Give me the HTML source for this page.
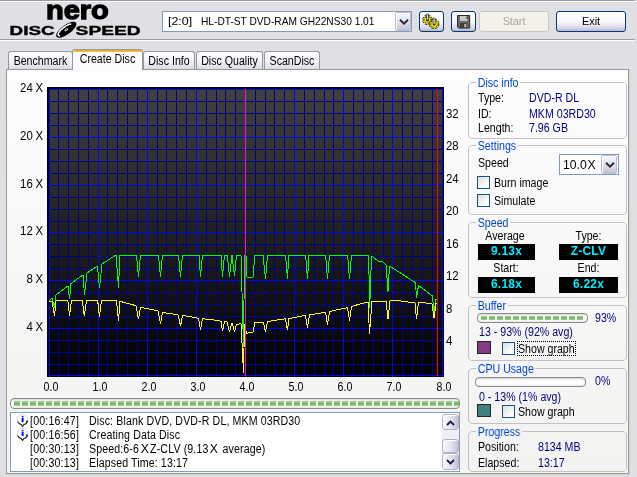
<!DOCTYPE html>
<html><head><meta charset="utf-8"><title>Nero DiscSpeed</title>
<style>
html,body{margin:0;padding:0}
body{width:637px;height:477px;overflow:hidden;background:#e0dfe3;position:relative;font-family:"Liberation Sans",Arial,sans-serif;font-size:12px;color:#000;line-height:14px}
div,span{position:absolute;box-sizing:border-box;white-space:nowrap}
.hl{left:0;width:635px;height:1px}
#logo{position:absolute;left:0;top:0}
.combo{background:#fff;border:1px solid #7f9db9}
.dd{border:1px solid #b4bdd8;border-radius:2px;background:linear-gradient(#f6f6fa,#e0dfea 55%,#c3c2d4);box-shadow:inset 1px 1px 0 #fff}
.dd svg{position:absolute;left:2.5px;top:6px}
.btn{border:1px solid #003c74;border-radius:3px;background:linear-gradient(#fff 0,#f9f9fc 50%,#dfddea 80%,#bcb9d3 100%);text-align:center;font-size:11px;line-height:19px;letter-spacing:-.1px}
.btn.dis{border-color:#c9c7ba;background:#f3f2ea;color:#a8a697}
.tab{top:51px;height:18px;border:1px solid #919b9c;border-bottom:none;border-radius:3px 3px 0 0;background:linear-gradient(#fff,#f4f4f8 50%,#dcdbe6)}
.tab.sel{top:49px;height:21px;background:#fcfcfe;z-index:3;overflow:hidden}
.tab.sel:before{content:"";position:absolute;left:-1px;right:-1px;top:-1px;height:3px;background:linear-gradient(#e68b2c,#ffc73c);border-radius:3px 3px 0 0}
#panel{left:6px;top:69px;width:623px;height:405px;border:1px solid #919b9c;background:linear-gradient(#fdfdfe,#f6f6f5 60%,#f3f3f1);z-index:1}
#shade{left:629px;top:69px;width:2px;height:407px;background:linear-gradient(90deg,#d9d6cb 50%,#dedcd8 50%);z-index:0}
#shade2{left:6px;top:474px;width:625px;height:2px;background:linear-gradient(#d9d6cb 50%,#dedcd8 50%);z-index:0}
#root{left:0;top:0;width:637px;height:477px;z-index:2;will-change:transform}
#graph{position:absolute;left:47px;top:87px}
.t{height:14px;line-height:14px;font-size:12px;transform:scaleX(.885);transform-origin:0 50%}
.t.c{text-align:center;transform-origin:50% 50%}
.t.r{text-align:right;transform-origin:100% 50%}
.t.r i{margin-right:0;transform:none;margin-left:2.8px}
.t i{font-style:normal;margin:0 2.2px;display:inline-block;transform:scaleX(1.15)}
.gt{color:#0046d5;background:#fafafa;padding:0 2px;margin-left:-2px}
.pb{border:1px solid #8a8a8a;border-radius:4px;background:linear-gradient(#d8d8d8,#fff 35%,#fff 70%,#e8e8e8);overflow:hidden}
.pb b{position:relative;display:inline-block;width:6px;height:5px;margin-right:2px;background:linear-gradient(#b4d8a4,#6cb454 50%,#a4d094);vertical-align:top}
.pb .in{left:3px;top:2px;line-height:0;font-size:0}
.pb.s b{height:4px}
.gb{left:468px;width:159px;border:1px solid #c6c3cb;border-radius:4px}
.nv{color:#000080}
.lcd{background:#000;color:#00ecff;font-weight:bold;font-size:12px;line-height:14px;height:16px;width:57px;text-align:center;letter-spacing:.2px}
.cb{width:13px;height:13px;border:1px solid #1c5180;background:linear-gradient(135deg,#dcdcd7,#fff 80%)}
.sq{width:14px;height:13px;border:1px solid #222}
#log{left:10px;top:412px;width:450px;height:60px;background:#fff;border:1px solid #7f9db9}
.sb{left:431px;width:17px;border:1px solid #b0afc6;border-radius:3px;background:linear-gradient(90deg,#fafafd,#e3e2ee 55%,#c2c1d4);box-shadow:inset 1px 1px 0 #fff}
#trk{left:431px;top:17px;width:17px;height:24px;background:#efeef5}
.tah{font-size:11px;line-height:13px;letter-spacing:-.2px}
</style></head><body>
<div id="shade"></div><div id="shade2"></div>
<div id="panel"></div>
<div id="root">
<div class="hl" style="top:0;background:#9d9da1"></div><div class="hl" style="top:1px;background:#fff"></div>
<div class="hl" style="top:39px;background:#9d9da1"></div><div class="hl" style="top:40px;background:#fff"></div>

<svg id="logo" width="160" height="39" viewBox="0 0 160 39">
<text x="45.9" y="19.2" font-family="Liberation Sans, Arial, sans-serif" font-weight="bold" font-size="26.5" textLength="63" lengthAdjust="spacingAndGlyphs" fill="#000" stroke="#000" stroke-width="1.3">nero</text>
<text x="9.6" y="34.8" font-family="Liberation Sans, Arial, sans-serif" font-weight="bold" font-size="13" textLength="45" lengthAdjust="spacingAndGlyphs" fill="#000" stroke="#000" stroke-width="0.4">DISC</text>
<text x="75.6" y="34.8" font-family="Liberation Sans, Arial, sans-serif" font-weight="bold" font-size="13" textLength="65" lengthAdjust="spacingAndGlyphs" fill="#000" stroke="#000" stroke-width="0.4">SPEED</text>
<g transform="translate(66.3 29.8) rotate(-36)"><ellipse cx="0" cy="0" rx="12" ry="4.7" fill="#000"/><path d="M-8.5 1.2 A9 3 0 0 1 7.5 -1.8" stroke="#fff" stroke-width="1.5" fill="none"/><ellipse cx="0" cy="0" rx="2" ry="1.1" fill="#fff"/><ellipse cx="0" cy="0" rx=".9" ry=".5" fill="#000"/></g>
</svg>

<div class="combo" style="left:162px;top:11px;width:250px;height:21px"><span class="tah" style="left:4.8px;top:3px;font-size:11.5px;letter-spacing:0;transform:scaleX(1.08);transform-origin:0 50%">[2:0]</span><span class="tah" style="left:38px;top:3px;font-size:11.5px;letter-spacing:0;transform:scaleX(.885);transform-origin:0 50%">HL-DT-ST DVD-RAM GH22NS30 1.01</span>
<div class="dd" style="left:232px;top:0px;width:16px;height:19px"><svg width="10" height="6" viewBox="0 0 10 6"><path d="M1 .8l4 3.8L9 .8" stroke="#2a2a3a" stroke-width="2" fill="none"/></svg></div></div>

<div class="btn" style="left:419px;top:11px;width:25px;height:21px">
<svg width="23" height="19" viewBox="0 0 23 19" style="position:absolute;left:0;top:0">
<g id="gr"><circle cx="7.5" cy="7.8" r="3.7" fill="none" stroke="#141000" stroke-width="3" stroke-dasharray="2 .906"/><circle cx="7.5" cy="7.8" r="3.2" fill="#141000"/><circle cx="7.5" cy="7.8" r="3.7" fill="none" stroke="#f6f000" stroke-width="1.7" stroke-dasharray="1.3 1.606" stroke-dashoffset="-.35"/><circle cx="7.5" cy="7.8" r="2.9" fill="#f6f000"/><ellipse cx="7.5" cy="8.4" rx="1.5" ry="1" fill="#2c2600"/><rect x="6.4" y="1.9" width="2.2" height="6" rx=".7" fill="#9a9a9a" stroke="#2a2a2a" stroke-width=".7"/><rect x="7.1" y="2.4" width=".8" height="5" fill="#ececec"/></g>
<use href="#gr" x="6.6" y="4.2"/></svg></div>
<div class="btn" style="left:451px;top:11px;width:25px;height:21px">
<svg width="23" height="19" viewBox="0 0 23 19" style="position:absolute;left:0;top:0"><path d="M5.5 3.5h12.2v12.6h-11l-1.2-1.2z" fill="#6a6a6a" stroke="#2c2c2c"/><rect x="8" y="4" width="7.4" height="5" fill="#c8c8c8"/><rect x="14.3" y="4.6" width="1.8" height="2" fill="#3a3a3a"/><rect x="8" y="11" width="7.2" height="5" fill="#3c3c3c"/><rect x="12.3" y="12" width="2" height="3.2" fill="#bdbdbd"/></svg></div>
<div class="btn dis" style="left:479px;top:11px;width:70px;height:21px">Start</div>
<div class="btn" style="left:556px;top:11px;width:70px;height:21px">Exit</div>

<div class="tab" style="left:8px;width:65px"></div>
<div class="tab sel" style="left:72px;width:71px"></div>
<div class="tab" style="left:143px;width:52px"></div>
<div class="tab" style="left:196px;width:67px"></div>
<div class="tab" style="left:264px;width:56px"></div>
<div style="z-index:4;left:0;top:0">
<span class="t c " style="left:8px;top:54px;width:65px;">Benchmark</span>
<span class="t c " style="left:72px;top:52px;width:71px;">Create Disc</span>
<span class="t c " style="left:143px;top:54px;width:52px;">Disc Info</span>
<span class="t c " style="left:196px;top:54px;width:67px;">Disc Quality</span>
<span class="t c " style="left:264px;top:54px;width:56px;">ScanDisc</span>
</div>

<svg id="graph" width="397" height="290" viewBox="47 87 397 290" shape-rendering="crispEdges">
<defs><linearGradient id="gg" x1="0" y1="0" x2="0" y2="1"><stop offset="0" stop-color="#404040"/><stop offset="1" stop-color="#000"/></linearGradient></defs>
<rect x="47" y="87" width="397" height="290" fill="#000"/>
<rect x="49" y="89" width="394" height="287" fill="url(#gg)"/>
<path d="M58 89v287M68 89v287M78 89v287M88 89v287M107 89v287M117 89v287M127 89v287M137 89v287M157 89v287M166 89v287M176 89v287M186 89v287M206 89v287M216 89v287M225 89v287M235 89v287M255 89v287M265 89v287M274 89v287M284 89v287M304 89v287M314 89v287M324 89v287M333 89v287M353 89v287M363 89v287M373 89v287M383 89v287M402 89v287M412 89v287M422 89v287M432 89v287M49 364h394M49 352h394M49 340h394M49 316h394M49 304h394M49 292h394M49 268h394M49 256h394M49 244h394M49 221h394M49 209h394M49 197h394M49 173h394M49 161h394M49 149h394M49 125h394M49 113h394M49 101h394" stroke="#00008a" stroke-width="1" fill="none" transform="translate(.5 .5)"/>
<path d="M49 89v287M98 89v287M147 89v287M196 89v287M245 89v287M294 89v287M343 89v287M392 89v287M442 89v287M49 375h394M49 328h394M49 280h394M49 232h394M49 185h394M49 137h394M49 89h394M443 375h1M443 367h1M443 359h1M443 351h1M443 342h1M443 334h1M443 326h1M443 318h1M443 310h1M443 302h1M443 294h1M443 286h1M443 278h1M443 269h1M443 261h1M443 253h1M443 245h1M443 237h1M443 229h1M443 221h1M443 212h1M443 204h1M443 196h1M443 188h1M443 180h1M443 172h1M443 164h1M443 156h1M443 148h1M443 139h1M443 131h1M443 123h1M443 115h1M443 107h1M443 99h1M443 91h1" stroke="#0000ff" stroke-width="1" fill="none" transform="translate(.5 .5)"/>
<path d="M49 301 L52 298 L54.5 308 L56 295 L68 286 L69.5 299 L71 283.5 L83 275 L84.5 295 L87 273 L97.5 266 L99.5 288 L102 264 L116 255 L118.5 287.5 L120 255 L136.5 255 L138.5 277 L140.5 255 L158.5 255 L160.5 277 L162.5 255 L178.5 255 L180.5 277 L182.5 255 L199 255 L200.5 277 L202.5 255 L221 255 L222.5 277 L224.5 255 L227.3 255 L229.5 277 L232 255 L234.5 276 L236.5 255 L241 255 L243.5 347 L244.5 255 L246 256 L246.8 277 L253.4 277 L254.5 255 L263 255 L265.5 279 L267.5 255 L285.5 255 L287.5 279 L288.7 255 L305.6 255 L307.5 279 L309 255 L325.6 255 L327.5 279 L329.5 255 L347.6 255 L349.5 279 L351.5 255 L368.6 255 L369.7 308 L371.5 256 L378 261 L382 261 L386 264.7 L388 291.5 L389.5 266 L415.5 282.7 L416.5 297.7 L418.5 285.6 L432.5 296 L434 314 L436 299 L437 299" stroke="#00ff00" stroke-width="1" fill="none" shape-rendering="crispEdges" stroke-linejoin="bevel"/>
<path d="M49 301 L52 301 L54.5 315.7 L56 301 L67.8 300.5 L69.5 315.7 L71.5 300.5 L82.3 300.5 L84.3 316 L86.5 300.5 L97.7 300.5 L99.4 316.5 L101.5 300.5 L116.5 301 L118.5 320.5 L120 301.3 L136 305.7 L138.5 319.4 L140.5 307.3 L158 310.7 L160.5 323.6 L162.5 312.6 L178 314.6 L180.5 326.4 L182.5 315.4 L198.5 318.2 L200.5 329.8 L202.5 318.8 L211 319.5 L221 321.2 L222.5 331.4 L224.5 321.5 L227 322 L229.5 332 L232 322.6 L234.5 331.7 L236.5 324.6 L241 323.5 L243.5 372.6 L244.5 324 L246.5 333.3 L253 332 L255 322.6 L263.5 322.3 L265.5 332 L267.5 321.5 L285.5 318.7 L287.5 330.4 L289 318.5 L305.5 315.4 L307.5 327.5 L309.5 315 L325.5 312.3 L327.5 324.6 L329.5 311.5 L347.5 307.6 L349.5 320.5 L351.5 306.3 L368 302 L369.5 333.5 L372 301.5 L386 301 L388 319 L390 301 L399 300.8 L415 302.9 L416.5 319 L418.5 302.4 L432 303.5 L434 318 L436 303.5 L437 303" stroke="#ffff00" stroke-width="1" fill="none" shape-rendering="crispEdges" stroke-linejoin="bevel"/>
<path d="M245.5 89v287" stroke="#ff00ff" stroke-width="1" fill="none"/>
<path d="M437.5 89v287" stroke="#ff0000" stroke-width="1" fill="none"/>
</svg>
<span class="t r " style="left:3px;top:320px;width:40px;transform:scaleX(.95)">4<i>X</i></span>
<span class="t r " style="left:3px;top:272px;width:40px;transform:scaleX(.95)">8<i>X</i></span>
<span class="t r " style="left:3px;top:224px;width:40px;transform:scaleX(.95)">12<i>X</i></span>
<span class="t r " style="left:3px;top:177px;width:40px;transform:scaleX(.95)">16<i>X</i></span>
<span class="t r " style="left:3px;top:129px;width:40px;transform:scaleX(.95)">20<i>X</i></span>
<span class="t r " style="left:3px;top:81px;width:40px;transform:scaleX(.95)">24<i>X</i></span>
<span class="t " style="left:446.2px;top:334px;transform:scaleX(.95)">4</span>
<span class="t " style="left:446.2px;top:302px;transform:scaleX(.95)">8</span>
<span class="t " style="left:446.2px;top:269px;transform:scaleX(.95)">12</span>
<span class="t " style="left:446.2px;top:237px;transform:scaleX(.95)">16</span>
<span class="t " style="left:446.2px;top:204px;transform:scaleX(.95)">20</span>
<span class="t " style="left:446.2px;top:172px;transform:scaleX(.95)">24</span>
<span class="t " style="left:446.2px;top:139px;transform:scaleX(.95)">28</span>
<span class="t " style="left:446.2px;top:107px;transform:scaleX(.95)">32</span>
<span class="t c " style="left:31px;top:380px;width:40px;">0.0</span>
<span class="t c " style="left:80px;top:380px;width:40px;">1.0</span>
<span class="t c " style="left:129px;top:380px;width:40px;">2.0</span>
<span class="t c " style="left:178px;top:380px;width:40px;">3.0</span>
<span class="t c " style="left:227px;top:380px;width:40px;">4.0</span>
<span class="t c " style="left:276px;top:380px;width:40px;">5.0</span>
<span class="t c " style="left:325px;top:380px;width:40px;">6.0</span>
<span class="t c " style="left:374px;top:380px;width:40px;">7.0</span>
<span class="t c " style="left:424px;top:380px;width:40px;">8.0</span>

<div class="pb" style="left:10px;top:398px;width:450px;height:11px"><div class="in"><b></b><b></b><b></b><b></b><b></b><b></b><b></b><b></b><b></b><b></b><b></b><b></b><b></b><b></b><b></b><b></b><b></b><b></b><b></b><b></b><b></b><b></b><b></b><b></b><b></b><b></b><b></b><b></b><b></b><b></b><b></b><b></b><b></b><b></b><b></b><b></b><b></b><b></b><b></b><b></b><b></b><b></b><b></b><b></b><b></b><b></b><b></b><b></b><b></b><b></b><b></b><b></b><b></b><b></b><b></b><b></b></div></div>

<div id="log">
<svg width="14" height="28" viewBox="0 0 14 28" style="position:absolute;left:4.7px;top:0"><g id="ic"><circle cx="6.6" cy="6.6" r="5.2" fill="#fff" stroke="#b0b0b0" stroke-width=".9" stroke-dasharray="1.6 1.3"/><path d="M1.6 8.4A5.3 5.3 0 0 0 5.2 11.6L6.6 13.4 7.8 11.7A5.3 5.3 0 0 0 11.7 8" fill="none" stroke="#222" stroke-width="1.1"/><circle cx="10.9" cy="8.6" r="1" fill="#333"/><path d="M5.3 4l1.3-1.5L7.9 4z" fill="#0000ff"/><rect x="5.6" y="4.6" width="2" height="4.4" fill="#0000ff"/></g><use href="#ic" y="14"/></svg>
<div id="trk"></div><div class="sb" style="top:1px;height:16px"><svg width="9" height="6" viewBox="0 0 9 6" style="position:absolute;left:3px;top:5px"><path d="M1 5l3.5-3.5L8 5" stroke="#1c1c3c" stroke-width="1.8" fill="none"/></svg></div>
<div class="sb" style="top:26px;height:14px"></div>
<div class="sb" style="top:40px;height:17px"><svg width="9" height="6" viewBox="0 0 9 6" style="position:absolute;left:3px;top:5px"><path d="M1 1l3.5 3.5L8 1" stroke="#1c1c3c" stroke-width="1.8" fill="none"/></svg></div>
</div>
<span class="t " style="left:29.6px;top:414px;letter-spacing:.2px">[00:16:47]</span><span class="t " style="left:88.7px;top:414px;letter-spacing:.13px">Disc: Blank DVD, DVD-R DL, MKM 03RD30</span>
<span class="t " style="left:29.6px;top:428px;letter-spacing:.2px">[00:16:56]</span><span class="t " style="left:88.7px;top:428px;letter-spacing:.13px">Creating Data Disc</span>
<span class="t " style="left:29.6px;top:442px;letter-spacing:.2px">[00:30:13]</span><span class="t " style="left:88.7px;top:442px;letter-spacing:.13px">Speed:6-6<i>X</i>Z-CLV (9.13<i>X</i> average)</span>
<span class="t " style="left:29.6px;top:456px;letter-spacing:.2px">[00:30:13]</span><span class="t " style="left:88.7px;top:456px;letter-spacing:.13px">Elapsed Time: 13:17</span>

<svg class="gbs" style="position:absolute;left:468px;top:82px" width="159" height="57" viewBox="0 0 159 57"><path d="M3.0 .5H156.0L158.5 3.0V54.0L156.0 56.5H3.0L.5 54.0V3.0Z" fill="none" stroke="#c4c0ca" stroke-width="1"/></svg><span class="t gt" style="left:478px;top:76px;background:#fdfdfe">Disc info</span>
<span class="t " style="left:478px;top:91px;">Type:</span><span class="t nv" style="left:528.5px;top:91px;">DVD-R DL</span>
<span class="t " style="left:478px;top:107px;">ID:</span><span class="t nv" style="left:528.5px;top:107px;">MKM 03RD30</span>
<span class="t " style="left:478px;top:121px;">Length:</span><span class="t nv" style="left:528.5px;top:121px;">7.96 GB</span>

<svg class="gbs" style="position:absolute;left:468px;top:145px" width="159" height="70" viewBox="0 0 159 70"><path d="M3.0 .5H156.0L158.5 3.0V67.0L156.0 69.5H3.0L.5 67.0V3.0Z" fill="none" stroke="#c4c0ca" stroke-width="1"/></svg><span class="t gt" style="left:478px;top:139px;background:#fbfbfb">Settings</span>
<span class="t " style="left:478px;top:156px;">Speed</span>
<div class="combo" style="left:559px;top:154px;width:60px;height:21px"><span style="left:3px;top:2px;font-size:13.5px;line-height:15px;transform:scaleX(.9);transform-origin:0 50%">10.0<i style="font-style:normal;margin-left:1px">X</i></span>
<div class="dd" style="left:41px;top:0px;width:16px;height:19px"><svg width="10" height="6" viewBox="0 0 10 6"><path d="M1 .8l4 3.8L9 .8" stroke="#2a2a3a" stroke-width="2" fill="none"/></svg></div></div>
<div class="cb" style="left:477px;top:176px"></div><span class="t " style="left:494px;top:176px;">Burn image</span>
<div class="cb" style="left:477px;top:194px"></div><span class="t " style="left:494px;top:194px;">Simulate</span>

<svg class="gbs" style="position:absolute;left:468px;top:222px" width="159" height="76" viewBox="0 0 159 76"><path d="M3.0 .5H156.0L158.5 3.0V73.0L156.0 75.5H3.0L.5 73.0V3.0Z" fill="none" stroke="#c4c0ca" stroke-width="1"/></svg><span class="t gt" style="left:478px;top:216px;background:#f9f9f8">Speed</span>
<span class="t c " style="left:475.5px;top:229px;width:58px;">Average</span>
<span class="t c " style="left:559px;top:229px;width:59px;">Type:</span>
<div class="lcd" style="left:478px;top:244px">9.13x</div><div class="lcd" style="left:559px;top:244px;width:59px">Z-CLV</div>
<span class="t c " style="left:477px;top:261px;width:58px;">Start:</span>
<span class="t c " style="left:559px;top:261px;width:59px;">End:</span>
<div class="lcd" style="left:478px;top:277px">6.18x</div><div class="lcd" style="left:559px;top:277px;width:59px">6.22x</div>

<svg class="gbs" style="position:absolute;left:468px;top:305px" width="159" height="56" viewBox="0 0 159 56"><path d="M3.0 .5H156.0L158.5 3.0V53.0L156.0 55.5H3.0L.5 53.0V3.0Z" fill="none" stroke="#c4c0ca" stroke-width="1"/></svg><span class="t gt" style="left:478px;top:299px;background:#f6f6f5">Buffer</span>
<div class="pb s" style="left:477px;top:313px;width:111px;height:10px"><div class="in" style="top:2px"><b></b><b></b><b></b><b></b><b></b><b></b><b></b><b></b><b></b><b></b><b></b><b></b><b></b></div></div>
<span class="t nv" style="left:595px;top:311px;">93%</span>
<span class="t nv" style="left:479px;top:325px;">13 - 93% (92% avg)</span>
<div class="sq" style="left:477px;top:341px;background:#823a85"></div>
<div class="cb" style="left:502px;top:342px"></div>
<div style="left:517px;top:341px;width:59px;height:15px;border:1px dotted #000"></div>
<span class="t " style="left:518px;top:342px;">Show graph</span>

<svg class="gbs" style="position:absolute;left:468px;top:368px" width="159" height="56" viewBox="0 0 159 56"><path d="M3.0 .5H156.0L158.5 3.0V53.0L156.0 55.5H3.0L.5 53.0V3.0Z" fill="none" stroke="#c4c0ca" stroke-width="1"/></svg><span class="t gt" style="left:478px;top:362px;background:#f5f5f4">CPU Usage</span>
<div class="pb s" style="left:475px;top:377px;width:111px;height:10px"></div>
<span class="t nv" style="left:595px;top:374px;">0%</span>
<span class="t nv" style="left:479px;top:390px;">0 - 13% (1% avg)</span>
<div class="sq" style="left:477px;top:404px;background:#408080"></div>
<div class="cb" style="left:502px;top:405px"></div>
<span class="t " style="left:518px;top:405px;">Show graph</span>

<svg class="gbs" style="position:absolute;left:468px;top:431px" width="159" height="41" viewBox="0 0 159 41"><path d="M3.0 .5H156.0L158.5 3.0V38.0L156.0 40.5H3.0L.5 38.0V3.0Z" fill="none" stroke="#c4c0ca" stroke-width="1"/></svg><span class="t gt" style="left:478px;top:425px;background:#f4f4f2">Progress</span>
<span class="t " style="left:478px;top:440px;">Position:</span><span class="t nv" style="left:538px;top:440px;">8134 MB</span>
<span class="t " style="left:478px;top:456px;">Elapsed:</span><span class="t nv" style="left:538px;top:456px;">13:17</span>
</div>
</body></html>
